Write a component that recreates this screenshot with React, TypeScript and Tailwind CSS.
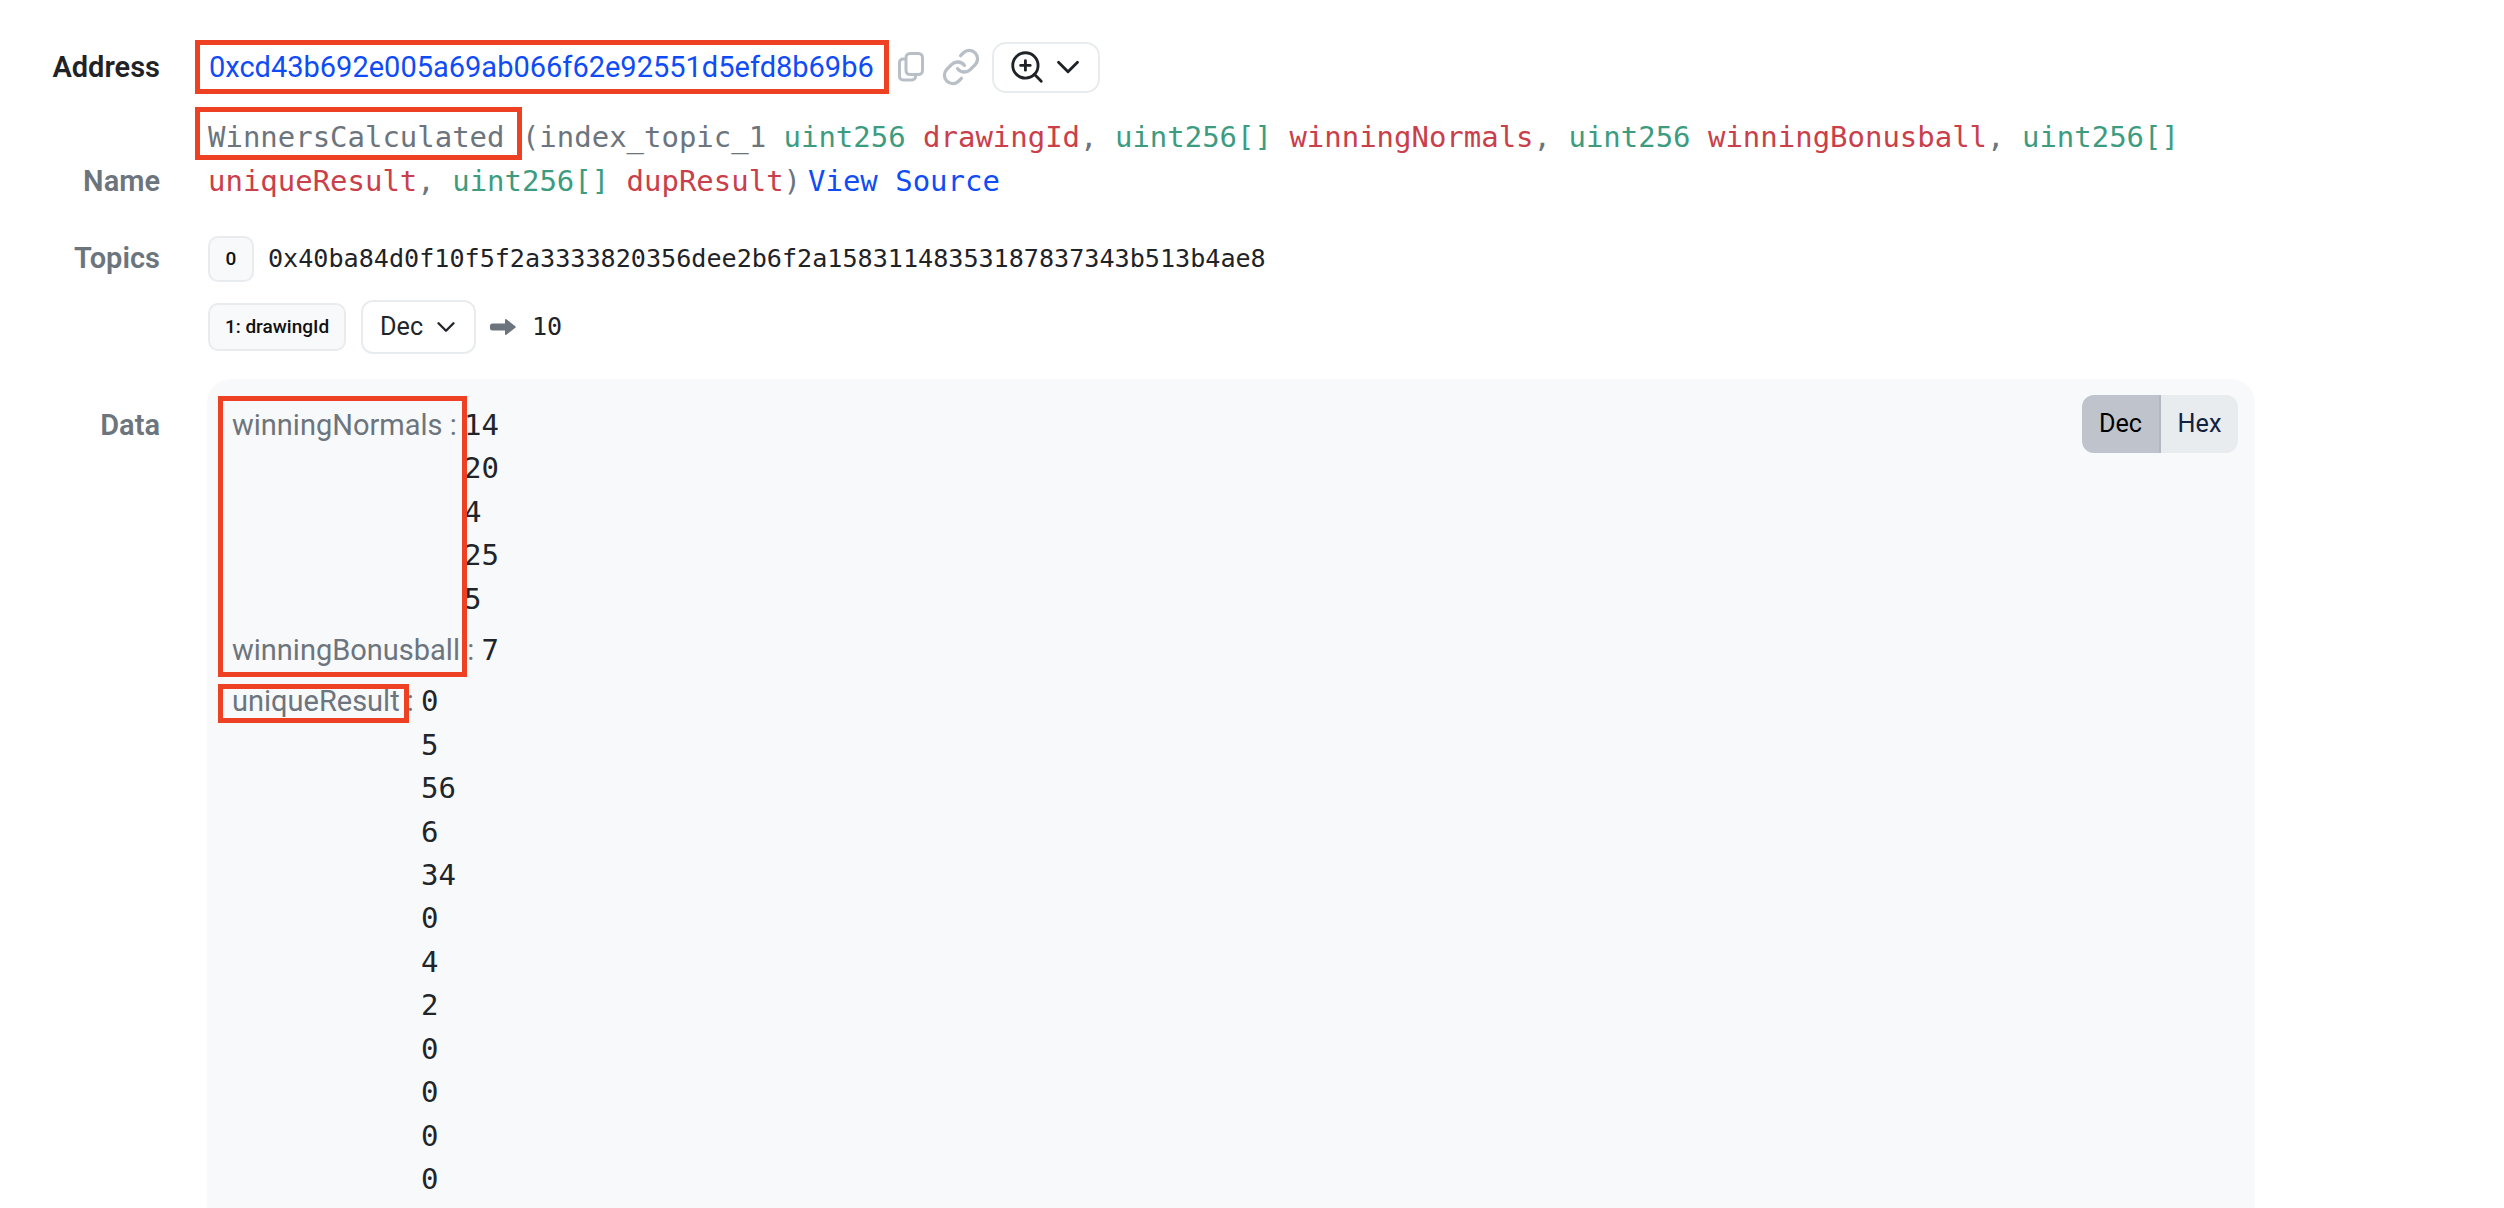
import { ChevronDown, Link, ZoomIn } from "lucide-react";

const mono = "font-['DejaVu_Sans_Mono',monospace]";

function CopyIcon() {
  return (
    <svg viewBox="0 0 26 30" className="h-[30px] w-[26px]" fill="none" stroke="#b9bfc7" strokeWidth="3">
      <rect x="8" y="1.5" width="16.5" height="21" rx="4" />
      <path d="M8 7H5a3.5 3.5 0 0 0-3.5 3.5v14A3.5 3.5 0 0 0 5 28h9a3.5 3.5 0 0 0 3.5-3.5v-2" />
    </svg>
  );
}

function ArrowIcon() {
  return (
    <svg viewBox="0 0 26 16" className="h-[16px] w-[26px]" fill="#6c757d">
      <path d="M2.5 4.5H15V.8c0-.7.8-1 1.3-.6l9 7a1 1 0 0 1 0 1.6l-9 7c-.5.4-1.3.1-1.3-.6v-3.7H2.5A2.5 2.5 0 0 1 0 9V7a2.5 2.5 0 0 1 2.5-2.5z" />
    </svg>
  );
}

function Row({ label, strong, className, labelClassName, children }: { label: string; strong?: boolean; className?: string; labelClassName?: string; children: React.ReactNode }) {
  return (
    <div className={`flex ${className ?? ""}`}>
      <div className={`w-[160px] shrink-0 text-right font-semibold ${strong ? "text-[#1f2328]" : "text-[#6c757d]"} ${labelClassName ?? ""}`}>{label}</div>
      <div className="ml-[48px] min-w-0 flex-1">{children}</div>
    </div>
  );
}

function Field({ name, values }: { name: string; values: string[] }) {
  return (
    <div className="flex">
      <span className="whitespace-pre text-[#6c757d]">{name} : </span>
      <div className={`${mono} text-[29px] text-[#212529]`}>
        {values.map((v, i) => (
          <div key={i}>{v}</div>
        ))}
      </div>
    </div>
  );
}

export default function App() {
  return (
    <div className="h-[1208px] overflow-hidden bg-white pt-[40px] font-['Roboto',sans-serif] text-[29px] leading-[44px] text-[#1f2328]">
      {/* Address */}
      <Row label="Address" strong className="items-center">
        <div className="flex items-center">
          <a className="-ml-[13px] border-[5px] border-[#ee4023] pl-[9px] pr-[10px] text-[#0f4cf5]">0xcd43b692e005a69ab066f62e92551d5efd8b69b6</a>
          <span className="ml-[9px]"><CopyIcon /></span>
          <Link className="ml-[17px] h-[40px] w-[40px] text-[#b9bfc7]" strokeWidth={2} />
          <button className="ml-[11px] flex h-[51px] w-[108px] items-center gap-[3px] rounded-[14px] border-2 border-[#e9ecef] bg-white pl-[14px] text-[#1f2328]">
            <ZoomIn className="h-[38px] w-[38px] shrink-0" strokeWidth={1.8} />
            <ChevronDown className="h-[38px] w-[38px] shrink-0" strokeWidth={1.8} />
          </button>
        </div>
      </Row>

      {/* Name */}
      <Row label="Name" className="mt-[13px] items-end">
        <div className={`relative ${mono} w-[2060px] text-[28.98px] leading-[44px] text-[#6c757d]`}>
          <div className="absolute -left-[13px] top-0 h-[53px] w-[327px] border-[5px] border-[#ee4023]" />
          <div className="pt-[8px]">
            WinnersCalculated (index_topic_1 <span className="text-[#3d9c80]">uint256</span> <span className="text-[#c9404a]">drawingId</span>, <span className="text-[#3d9c80]">uint256[]</span> <span className="text-[#c9404a]">winningNormals</span>, <span className="text-[#3d9c80]">uint256</span> <span className="text-[#c9404a]">winningBonusball</span>, <span className="text-[#3d9c80]">uint256[]</span> <span className="text-[#c9404a]">uniqueResult</span>, <span className="text-[#3d9c80]">uint256[]</span> <span className="text-[#c9404a]">dupResult</span>)<span className="ml-[7px] text-[#0f4cf5]">View Source</span>
          </div>
        </div>
      </Row>

      {/* Topics */}
      <Row label="Topics" className="mt-[33px]">
        <div className="flex items-center gap-[14px]">
          <span className="flex h-[46px] w-[46px] items-center justify-center rounded-[10px] border-2 border-[#e9ecef] bg-[#f8f9fa] text-[19px] font-medium text-[#111]">0</span>
          <span className={`${mono} text-[25.12px]`}>0x40ba84d0f10f5f2a3333820356dee2b6f2a15831148353187837343b513b4ae8</span>
        </div>
        <div className="mt-[18px] flex items-center">
          <span className="flex h-[48px] w-[138px] items-center justify-center rounded-[10px] border-2 border-[#e9ecef] bg-[#f8f9fa] text-[19px] font-medium text-[#111]">1: drawingId</span>
          <button className="ml-[15px] flex h-[54px] w-[115px] items-center rounded-[12px] border-2 border-[#e9ecef] bg-white pl-[17px] text-[25.2px] text-[#212529]">
            Dec
            <ChevronDown className="ml-[8px] h-[30px] w-[30px] shrink-0" strokeWidth={1.9} />
          </button>
          <span className="ml-[14px]"><ArrowIcon /></span>
          <span className={`${mono} ml-[16px] text-[25.12px]`}>10</span>
        </div>
      </Row>

      {/* Data */}
      <Row label="Data" className="mt-[25px]" labelClassName="pt-[24px]">
        <div className="relative -ml-[1px] w-[2048px] rounded-[24px] bg-[#f8f9fa] pb-[200px] pl-[25px] pt-[25px]">
          <div className="pointer-events-none absolute left-[11px] top-[17px] h-[281px] w-[249px] border-[5px] border-[#ee4023]" />
          <div className="pointer-events-none absolute left-[11px] top-[305px] h-[39px] w-[191px] border-[5px] border-[#ee4023]" />
          <div className="absolute right-[17px] top-[16px] flex h-[58px] overflow-hidden rounded-[12px] text-[25.2px]">
            <span className="flex w-[79px] items-center justify-center border-r-2 border-[#b3b9c1] bg-[#bfc4cc] text-[#000]">Dec</span>
            <span className="flex w-[77px] items-center justify-center bg-[#e9ecef] text-[#12213f]">Hex</span>
          </div>
          <div className="flex flex-col gap-[8px] leading-[43.4px]">
            <Field name="winningNormals" values={["14", "20", "4", "25", "5"]} />
            <Field name="winningBonusball" values={["7"]} />
            <Field name="uniqueResult" values={["0", "5", "56", "6", "34", "0", "4", "2", "0", "0", "0", "0"]} />
          </div>
        </div>
      </Row>
    </div>
  );
}
